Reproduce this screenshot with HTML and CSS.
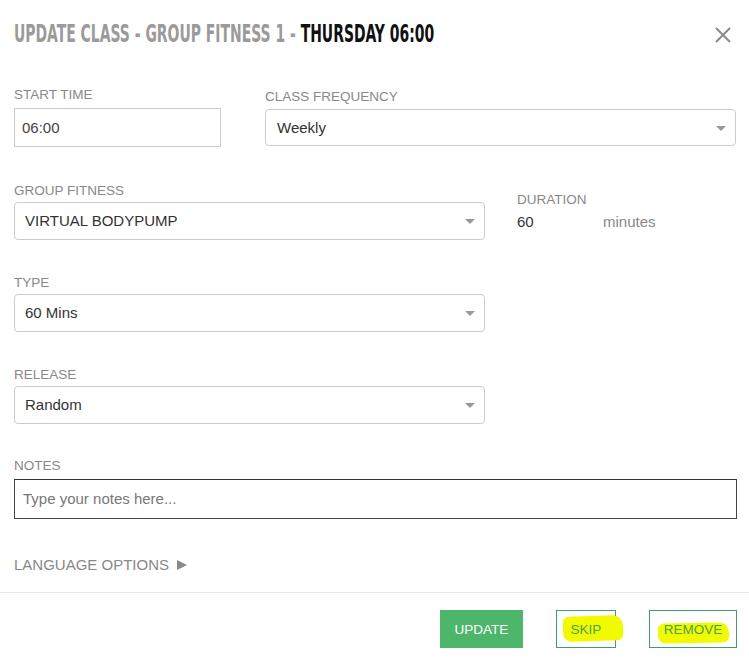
FILE: index.html
```html
<!DOCTYPE html>
<html lang="en">
<head>
<meta charset="utf-8">
<title>Update Class</title>
<link rel="stylesheet" href="styles.css">
</head>
<body>
<div class="modal">
  <header class="modal-header">
    <h1 class="title"><span class="title-text"><span class="muted">UPDATE CLASS - GROUP FITNESS 1 - </span><span class="strong">THURSDAY 06:00</span></span></h1>
    <button class="close" aria-label="Close">
      <svg width="18" height="18" viewBox="0 0 18 18"><path d="M2 2 L16 16 M16 2 L2 16" stroke="#8a8a8a" stroke-width="2" fill="none"/></svg>
    </button>
  </header>

  <div class="body">
    <div class="row row-1">
      <div class="field start-time">
        <label class="label">START TIME</label>
        <div class="input">06:00</div>
      </div>
      <div class="field frequency">
        <label class="label">CLASS FREQUENCY</label>
        <div class="select">Weekly<span class="caret"></span></div>
      </div>
    </div>

    <div class="row row-2">
      <div class="field half">
        <label class="label">GROUP FITNESS</label>
        <div class="select">VIRTUAL BODYPUMP<span class="caret"></span></div>
      </div>
      <div class="field duration">
        <label class="label">DURATION</label>
        <div class="duration-value"><span class="num">60</span><span class="unit">minutes</span></div>
      </div>
    </div>

    <div class="row row-gap">
      <div class="field half">
        <label class="label">TYPE</label>
        <div class="select">60 Mins<span class="caret"></span></div>
      </div>
    </div>

    <div class="row row-gap">
      <div class="field half">
        <label class="label">RELEASE</label>
        <div class="select">Random<span class="caret"></span></div>
      </div>
    </div>

    <div class="row notes-row">
      <div class="field full">
        <label class="label notes-label">NOTES</label>
        <div class="textarea">Type your notes here...</div>
      </div>
    </div>

    <div class="lang">LANGUAGE OPTIONS<span class="tri"></span></div>
  </div>

  <footer class="footer">
    <button class="btn btn-primary">UPDATE</button>
    <button class="btn btn-outline btn-skip"><span class="mark mark-skip"></span><span class="btn-text">SKIP</span></button>
    <button class="btn btn-outline btn-remove"><span class="mark mark-remove"></span><span class="btn-text">REMOVE</span></button>
  </footer>
</div>
</body>
</html>
```
FILE: styles.css
```css
* { box-sizing: border-box; }
html, body { margin: 0; padding: 0; background: #fff; }
body { font-family: "Liberation Sans", Arial, sans-serif; color: #444; width: 749px; height: 664px; overflow: hidden; }

.modal-header {
  display: flex;
  justify-content: space-between;
  align-items: flex-start;
  padding: 19px 14px 0 14px;
  height: 49px;
}
.title {
  margin: 0;
  font-family: "DejaVu Sans", sans-serif;
  font-stretch: condensed;
  font-weight: 700;
  font-size: 25px;
  line-height: 30px;
  white-space: nowrap;
  width: 430px;
}
.title-text {
  display: inline-block;
  transform: scaleX(0.62);
  transform-origin: 0 50%;
}
.muted { color: #9a9a9a; }
.strong { color: #111; }
.close {
  border: 0; background: none; padding: 0; margin: 7px 3px 0 0;
  width: 18px; height: 18px; cursor: pointer;
}
.close svg { display: block; }

.body { padding: 0 12px 0 14px; }
.row { display: flex; }
.row-1 { margin-top: 38px; }
.field { display: flex; flex-direction: column; }
.label {
  display: block;
  font-size: 13.5px;
  line-height: 16px;
  color: #888;
  margin-bottom: 3px;
}
.start-time { width: 207px; }
.start-time .label { margin-bottom: 5px; }
.frequency { width: 471px; margin-left: 44px; padding-top: 2px; }
.frequency .label { margin-bottom: 4px; }

.input {
  height: 39px;
  border: 1px solid #ccc;
  padding: 0 7px;
  font-size: 15px;
  line-height: 37px;
  color: #444;
}
.select {
  position: relative;
  height: 38px;
  border: 1px solid #ccc;
  border-radius: 4px;
  padding: 0 10px;
  font-size: 15px;
  line-height: 36px;
  color: #333;
}
.frequency .select { height: 37px; line-height: 35px; padding-left: 11px; }
.caret {
  position: absolute;
  right: 9px;
  top: 50%;
  margin-top: -2px;
  width: 0; height: 0;
  border-left: 5px solid transparent;
  border-right: 5px solid transparent;
  border-top: 5px solid #999;
}

.row-2 { margin-top: 36px; }
.half { width: 471px; }
.duration { margin-left: 32px; padding-top: 9px; }
.duration .label { margin-bottom: 5px; }
.duration-value { display: flex; font-size: 15px; line-height: 18px; }
.duration-value .num { color: #333; width: 86px; }
.duration-value .unit { color: #888; }

.row-gap { margin-top: 35px; }
.notes-row { margin-top: 34px; }
.full { width: 723px; }
.notes-label { margin-bottom: 5px; }
.textarea {
  height: 40px;
  border: 1px solid #444;
  border-top-color: #333;
  padding: 0 8px;
  font-size: 15px;
  line-height: 38px;
  color: #777;
}

.lang {
  display: flex;
  align-items: center;
  margin-top: 37px;
  font-size: 15px;
  line-height: 18px;
  color: #888;
}
.tri {
  display: inline-block;
  margin-left: 8px;
  width: 0; height: 0;
  border-left: 10px solid #888;
  border-top: 5.5px solid transparent;
  border-bottom: 5.5px solid transparent;
}

.footer {
  margin-top: 18px;
  border-top: 1px solid #e8e8e8;
  display: flex;
  justify-content: flex-end;
  gap: 33px;
  padding: 17px 12px 0 0;
}
.btn {
  position: relative;
  height: 38px;
  font-family: "Liberation Sans", Arial, sans-serif;
  font-size: 13.5px;
  padding: 0;
  cursor: pointer;
  isolation: isolate;
}
.btn-primary {
  width: 83px;
  background: #4db66b;
  border: 0;
  color: #fff;
}
.btn-outline {
  background: transparent;
  border: 1px solid #3f9c6e;
  color: #4ba34d;
}
.btn-skip { width: 60px; }
.btn-remove { width: 88px; }
.btn-text { position: relative; z-index: 1; }
.mark {
  position: absolute;
  background: #f1fb00;
  z-index: 0;
  border-radius: 6px 10px 6px 8px;
}
.mark-skip { left: 6px; top: 5px; width: 60px; height: 25px; transform: rotate(-2deg); }
.mark-remove { left: 8px; top: 12px; width: 71px; height: 20px; transform: rotate(-1deg); }
```
